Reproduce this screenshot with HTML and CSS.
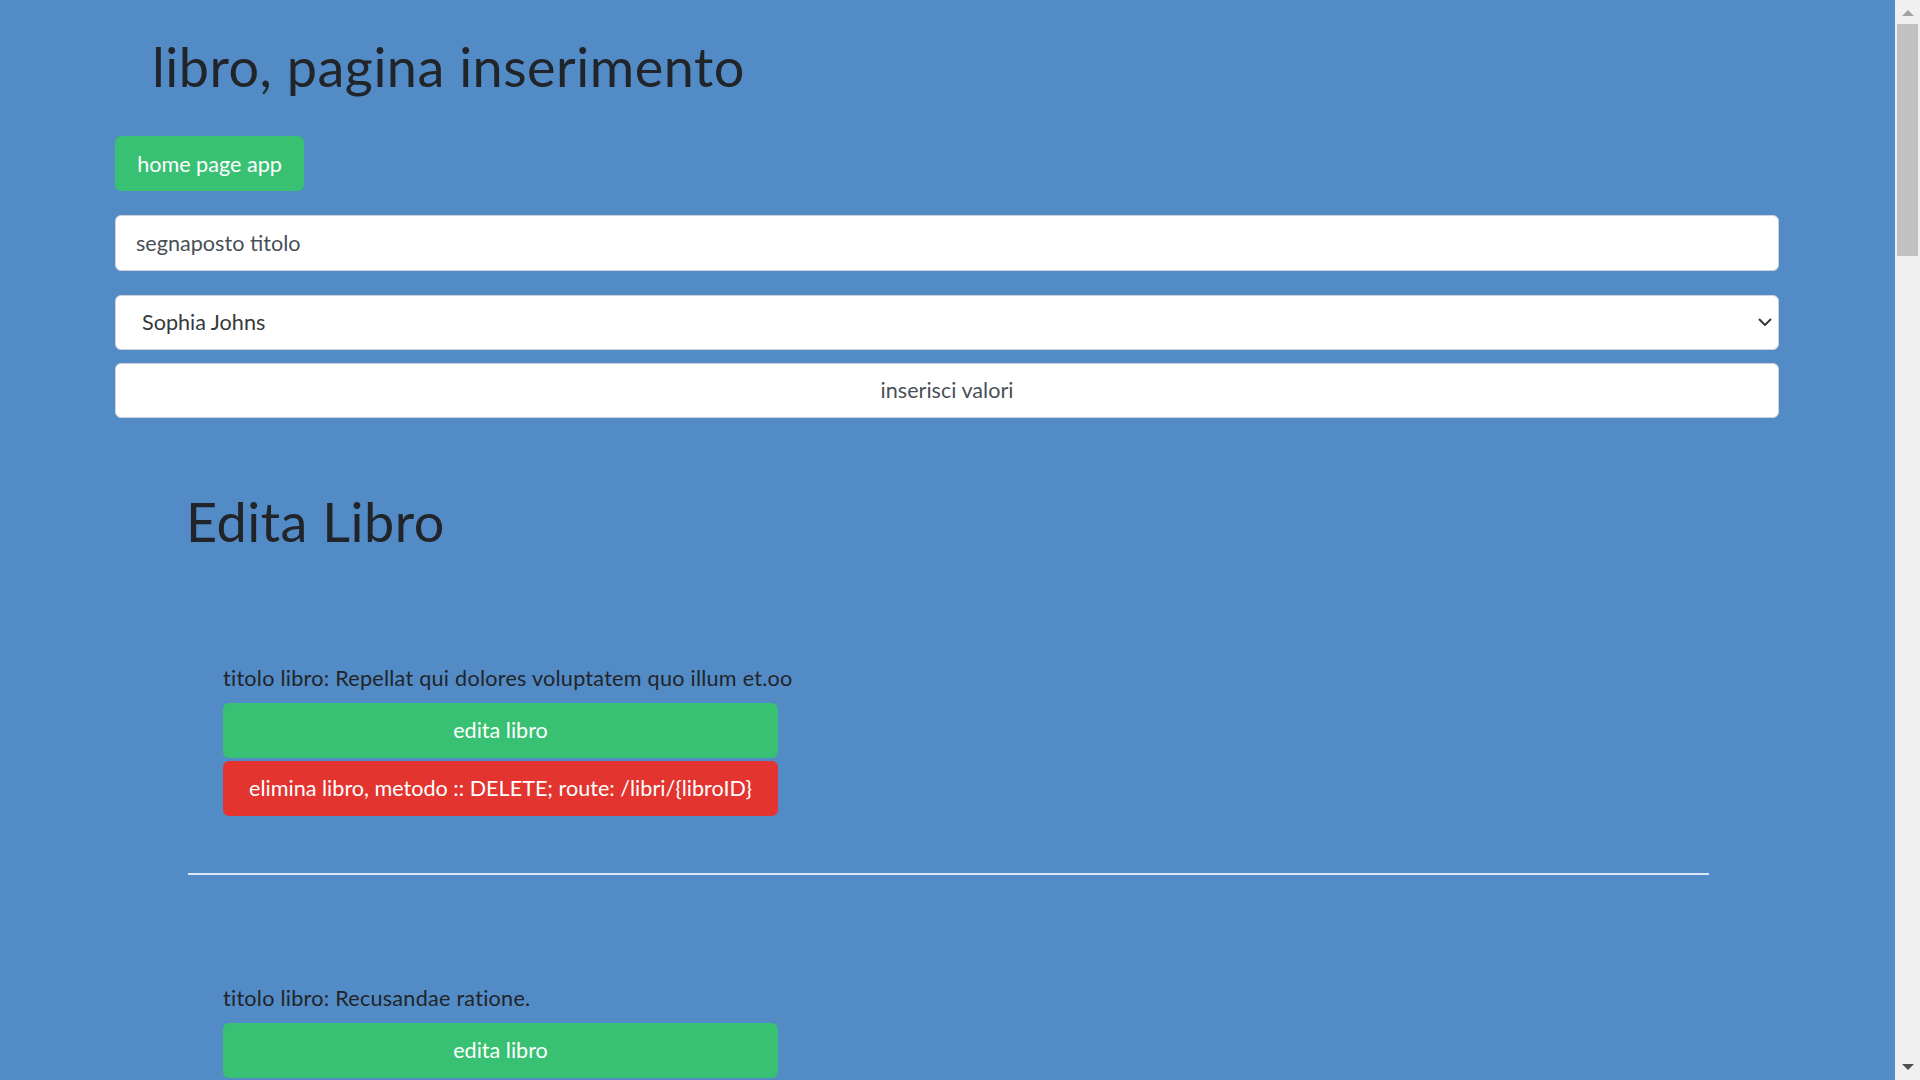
FILE: index.html
```html
<!DOCTYPE html>
<html lang="it">
<head>
<meta charset="utf-8">
<title>libro, pagina inserimento</title>
<link rel="stylesheet" href="styles.css">
</head>
<body>
<div class="viewport">
  <main class="page">
    <h1 class="title">libro, pagina inserimento</h1>
    <a class="btn btn-green btn-home" href="#">home page app</a>
    <form class="form">
      <input class="field" type="text" value="segnaposto titolo">
      <div class="select">
        <span class="select-value">Sophia Johns</span>
        <svg class="chevron" viewBox="0 0 14 8" width="14" height="8"><path d="M1 1 L7 7 L13 1" fill="none" stroke="#343a40" stroke-width="2"/></svg>
      </div>
      <button class="submit" type="button">inserisci valori</button>
    </form>
    <section class="edit">
      <h2 class="edit-title">Edita Libro</h2>
      <div class="book">
        <p class="book-title">titolo libro: Repellat qui dolores voluptatem quo illum et.oo</p>
        <a class="btn btn-green btn-wide" href="#">edita libro</a>
        <a class="btn btn-red btn-wide" href="#">elimina libro, metodo :: DELETE; route: /libri/{libroID}</a>
      </div>
      <hr class="sep">
      <div class="book book-2">
        <p class="book-title">titolo libro: Recusandae ratione.</p>
        <a class="btn btn-green btn-wide" href="#">edita libro</a>
      </div>
    </section>
  </main>
  <div class="scrollbar">
    <div class="sb-arrow sb-up"></div>
    <div class="sb-thumb"></div>
    <div class="sb-track"></div>
    <div class="sb-arrow sb-down"></div>
  </div>
</div>
</body>
</html>
```
FILE: styles.css
```css
* { box-sizing: border-box; }
html, body { margin: 0; height: 100%; overflow: hidden; }
body {
  background: #528bc5;
  font-family: "Lato", "Open Sans", sans-serif;
  color: #212529;
  font-size: 21.6px;
}
.viewport { display: flex; height: 1080px; }
.page {
  flex: 1;
  padding-left: 115px;
  padding-right: 116px;
  overflow: hidden;
}
.title {
  margin: 0;
  padding: 27px 0 0 37px;
  font-size: 54px;
  font-weight: 400;
  line-height: 80px;
  letter-spacing: 0.5px;
}
.btn {
  display: flex;
  align-items: center;
  justify-content: center;
  height: 55px;
  border-radius: 6px;
  color: #fff;
  text-decoration: none;
  font-size: 21.6px;
}
.btn-green { background: #38c172; }
.btn-red { background: #e3342f; }
.btn-home { width: 189px; margin-top: 29px; }
.form { display: flex; flex-direction: column; margin-top: 24px; }
.field {
  height: 56px;
  border: 1.5px solid #ced4da;
  border-radius: 6px;
  padding: 0 20px;
  font: inherit;
  color: #495057;
  background: #fff;
}
.select {
  margin-top: 24px;
  height: 55px;
  border: 1.5px solid #ced4da;
  border-radius: 6px;
  background: #fff;
  display: flex;
  align-items: center;
  justify-content: space-between;
  padding: 0 6px 2px 26px;
  color: #343a40;
}
.submit {
  margin-top: 13px;
  height: 55px;
  border: 1.5px solid #ced4da;
  border-radius: 6px;
  background: #fff;
  font: inherit;
  color: #495057;
  padding-bottom: 2px;
}
.edit { padding-left: 74px; }
.edit-title {
  margin: 0 0 0 -3px;
  padding-top: 64px;
  font-size: 54px;
  font-weight: 400;
  line-height: 80px;
  letter-spacing: 0.5px;
}
.book { padding-left: 34px; margin-top: 100px; }
.book-title { margin: 0 0 8.5px; line-height: 32px; letter-spacing: 0.25px; }
.btn-wide { width: 555px; }
.btn-red { margin-top: 3px; }
.sep {
  margin: 57px 0 0 -1px;
  width: 1521px;
  border: 0;
  border-top: 2px solid rgba(235, 242, 250, 0.9);
}
.book-2 { margin-top: 107.5px; }
.scrollbar {
  width: 25px;
  background: #f0f0f0;
  display: flex;
  flex-direction: column;
  align-items: center;
}
.sb-arrow { width: 0; height: 0; border-left: 6px solid transparent; border-right: 6px solid transparent; }
.sb-up { margin-top: 10px; border-bottom: 6px solid #a3a3a3; }
.sb-down { margin-bottom: 10px; border-top: 6px solid #505050; }
.sb-thumb { width: 21px; height: 232px; margin-top: 8px; background: #c1c1c1; }
.sb-track { flex: 1; }
```
